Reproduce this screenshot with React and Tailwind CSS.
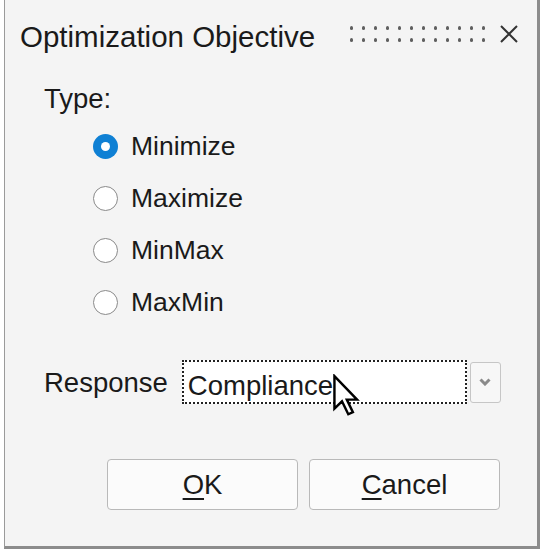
import React from 'react';

const Radio = ({ label, checked }) => (
    <div className="flex h-[52px] items-center">
        {checked ? (
            <span className="flex h-[25px] w-[25px] items-center justify-center rounded-full bg-[#0f80d4]">
                <span className="h-[9px] w-[9px] rounded-full bg-white" />
            </span>
        ) : (
            <span className="h-[25px] w-[25px] rounded-full border-[1.5px] border-[#8a8a8a] bg-white" />
        )}
        <span className="ml-[13px] text-[26.5px] leading-[26px]">{label}</span>
    </div>
);

const Cursor = () => (
    <svg className="absolute left-[148px] top-[12px]" width="29" height="43" viewBox="0 0 13.5 20.5">
        <path
            d="M1 1 V16.5 L4.6 13 L7.6 19.2 L9.8 18.2 L6.9 12.2 H11.8 Z"
            fill="white"
            stroke="black"
            strokeWidth="1.15"
            strokeLinejoin="miter"
        />
    </svg>
);

const App = () => {
    const dots = Array.from({ length: 24 });

    return (
        <div className="min-h-screen bg-white font-['Liberation_Sans',Arial,sans-serif] text-[#1a1a1a]">
            <div className="ml-[4px] h-[549px] w-[536px] border-l border-r-[3px] border-b-[3px] border-l-[#9a9a9a] border-r-[#8c8c8c] border-b-[#8c8c8c] bg-[#f4f4f4]">
                {/* title bar */}
                <div className="flex items-start pt-[22px] pl-[15px]">
                    <span className="text-[29.5px] leading-[29px]">Optimization Objective</span>
                    <div className="ml-auto mt-[4px] grid grid-cols-12 gap-x-[8.5px] gap-y-[8.5px]">
                        {dots.map((_, i) => (
                            <span key={i} className="h-[3.5px] w-[3.5px] rounded-full bg-[#5f5f5f]" />
                        ))}
                    </div>
                    <svg className="ml-[14px] mr-[18px] mt-[2px]" width="20" height="20" viewBox="0 0 20 20">
                        <path d="M2 2 L18 18 M18 2 L2 18" stroke="#333" strokeWidth="2" />
                    </svg>
                </div>

                <div className="pl-[39px]">
                    <div className="mt-[34px] text-[27.5px] leading-[27px]">Type:</div>

                    <div className="mt-[8px] ml-[49px]">
                        <Radio label="Minimize" checked />
                        <Radio label="Maximize" />
                        <Radio label="MinMax" />
                        <Radio label="MaxMin" />
                    </div>

                    <div className="mt-[32px] flex h-[44px] items-center">
                        <span className="text-[27.5px] leading-[27px]">Response</span>
                        <div className="relative ml-[14px] flex h-[44px] w-[285px] items-center border-2 border-dotted border-[#222] bg-white pl-[4px]">
                            <span className="mt-[6px] text-[27.5px] leading-[27px]">Compliance</span>
                            <Cursor />
                        </div>
                        <div className="ml-[3px] flex h-[41px] w-[31px] items-center justify-center rounded-[3px] border border-[#c6c6c6] bg-[#f7f7f7]">
                            <svg width="12" height="8" viewBox="0 0 12 8">
                                <path d="M1.5 1.5 L6 6 L10.5 1.5" fill="none" stroke="#8a8a8a" strokeWidth="3" />
                            </svg>
                        </div>
                    </div>

                    <div className="mt-[55px] ml-[63px] flex gap-[11px]">
                        <button className="flex h-[51px] w-[191px] items-center justify-center rounded-[4px] border border-[#b9b9b9] bg-[#fbfbfb] text-[27.5px] leading-[27px]">
                            <span className="underline decoration-[2px] underline-offset-[4px]">O</span>K
                        </button>
                        <button className="flex h-[51px] w-[191px] items-center justify-center rounded-[4px] border border-[#b9b9b9] bg-[#fbfbfb] text-[27.5px] leading-[27px]">
                            <span className="underline decoration-[2px] underline-offset-[4px]">C</span>ancel
                        </button>
                    </div>
                </div>
            </div>
        </div>
    );
};

export default App;
